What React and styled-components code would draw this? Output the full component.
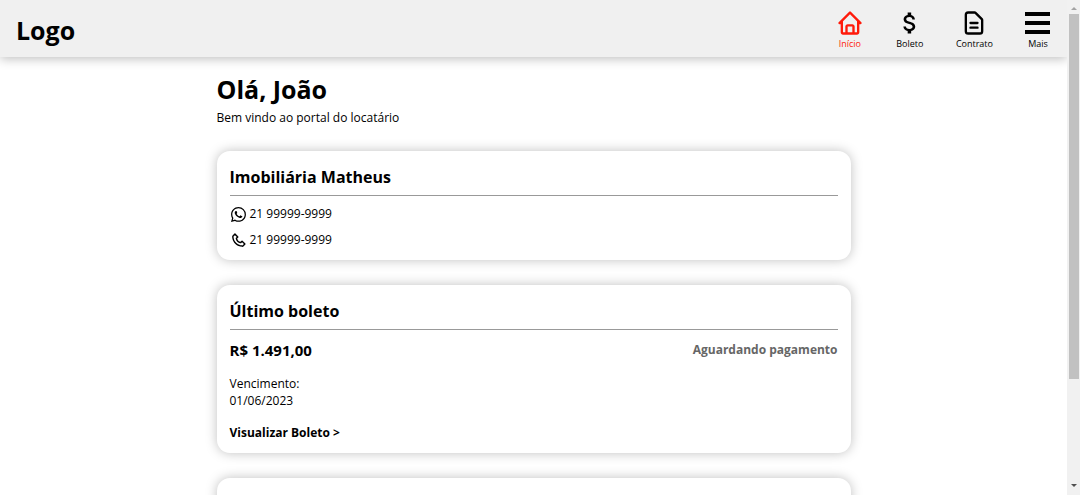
import React from 'react'
import styled, {createGlobalStyle} from 'styled-components'
import {BiHome, BiPhone} from 'react-icons/bi'
import {BsWhatsapp} from 'react-icons/bs'
import {HiOutlineDocumentText} from 'react-icons/hi'
import {MdAttachMoney} from 'react-icons/md'


const MenuBars = () => (
    <svg viewBox="0 0 26 28" fill="currentColor">
        <path d="M0 3h25v4H0zM0 12h25v4H0zM0 21h25v4H0z"/>
    </svg>
)

const menu = [
    {name: 'Início', Icon: BiHome, active: true},
    {name: 'Boleto', Icon: MdAttachMoney},
    {name: 'Contrato', Icon: HiOutlineDocumentText},
    {name: 'Mais', Icon: MenuBars},
]

const App = () => {
    return(
        <Screen>
            <GlobalStyle/>
            <Page>
                <Header>
                    <Logo>Logo</Logo>
                    <Nav>
                        {menu.map(({name, Icon, active})=>(
                            <NavLink key={name} href="#" $active={active}>
                                <Icon/>
                                {name}
                            </NavLink>
                        ))}
                    </Nav>
                </Header>
                <Main>
                    <Welcome>
                        <Title>Olá, João</Title>
                        <Text>Bem vindo ao portal do locatário</Text>
                    </Welcome>
                    <Card>
                        <Subtitle>Imobiliária Matheus</Subtitle>
                        <Contacts>
                            <Contact $iconPadding="1px"><BsWhatsapp/>21 99999-9999</Contact>
                            <Contact><BiPhone/>21 99999-9999</Contact>
                        </Contacts>
                    </Card>
                    <Card>
                        <Subtitle>Último boleto</Subtitle>
                        <PriceRow>
                            <Price>R$ 1.491,00</Price>
                            <Status>Aguardando pagamento</Status>
                        </PriceRow>
                        <Text>Vencimento:</Text>
                        <Text>01/06/2023</Text>
                        <CardLink href="#">Visualizar Boleto &gt;</CardLink>
                    </Card>
                    <Card/>
                </Main>
            </Page>
            <ScrollBar aria-hidden="true">
                <Arrow $up/>
                <Thumb/>
                <Arrow/>
            </ScrollBar>
        </Screen>
    )
}

export default App

const GlobalStyle = createGlobalStyle`
    * {
        box-sizing: border-box;
        margin: 0;
        padding: 0;
    }
    body {
        background: #fff;
        color: #000;
        font-family: 'Segoe UI', 'Open Sans', 'Noto Sans', sans-serif;
        font-size: 12px;
    }
    a {
        color: inherit;
        text-decoration: none;
    }
`;

const Screen = styled.div`
    display: flex;
    height: 100vh;
    overflow: hidden;
`;

const Page = styled.div`
    flex: 1;
    min-width: 0;
    overflow: hidden;
`;

const Header = styled.header`
    display: flex;
    justify-content: space-between;
    align-items: center;
    padding: 9px 16px 7px;
    background: #f0f0f0;
    box-shadow: 0 2px 10px rgba(0, 0, 0, 0.25);
`;

const Logo = styled.h1`
    font-size: 25px;
    line-height: 32px;
`;

const Nav = styled.nav`
    display: flex;
    gap: 32px;
`;

const NavLink = styled.a`
    display: flex;
    flex-direction: column;
    align-items: center;
    gap: 1px;
    color: ${({$active}) => $active ? '#ff1a0a' : '#000'};
    font-size: 9px;
    line-height: 12px;
    svg {
        width: auto;
        height: 28px;
    }
`;

const Main = styled.main`
    display: flex;
    flex-direction: column;
    gap: 25px;
    max-width: 634px;
    margin: 0 auto;
    padding: 15px 0;
`;

const Welcome = styled.div`
    display: flex;
    flex-direction: column;
    gap: 2px;
`;

const Title = styled.h2`
    font-size: 25px;
    line-height: 35px;
`;

const Text = styled.p`
    line-height: 17px;
`;

const Card = styled.section`
    min-height: 109px;
    padding: 12px 13px 7px;
    border-radius: 13px;
    background: #fff;
    box-shadow: 0 0 12px rgba(0, 0, 0, 0.25);
`;

const Subtitle = styled.h3`
    padding-bottom: 4px;
    border-bottom: 1px solid #999;
    font-size: 16px;
    line-height: 28px;
`;

const Contacts = styled.ul`
    padding-top: 5px;
    list-style: none;
`;

const Contact = styled.li`
    display: flex;
    align-items: center;
    gap: 3px;
    line-height: 26px;
    svg {
        width: 17px;
        height: 17px;
        padding: ${({$iconPadding}) => $iconPadding || '0'};
    }
`;

const PriceRow = styled.div`
    display: flex;
    justify-content: space-between;
    align-items: center;
    padding: 8px 0 13px;
    line-height: 24px;
`;

const Price = styled.strong`
    font-size: 15px;
`;

const Status = styled.strong`
    color: #666;
`;

const CardLink = styled.a`
    display: block;
    width: fit-content;
    padding: 15px 0 5px;
    font-weight: bold;
    line-height: 17px;
`;

const ScrollBar = styled.div`
    display: flex;
    flex-direction: column;
    align-items: center;
    width: 13px;
    padding: 4px 0;
    background: #f1f1f1;
`;

const Arrow = styled.span`
    border: 3px solid transparent;
    border-top-width: ${({$up}) => $up ? '0' : '3px'};
    border-bottom-width: ${({$up}) => $up ? '3px' : '0'};
    border-top-color: ${({$up}) => $up ? 'transparent' : '#505050'};
    border-bottom-color: ${({$up}) => $up ? '#a3a3a3' : 'transparent'};
    margin: 3px 0 4px;
`;

const Thumb = styled.span`
    flex: 0 0 75%;
    width: 10px;
    margin-bottom: auto;
    background: #c1c1c1;
`;
